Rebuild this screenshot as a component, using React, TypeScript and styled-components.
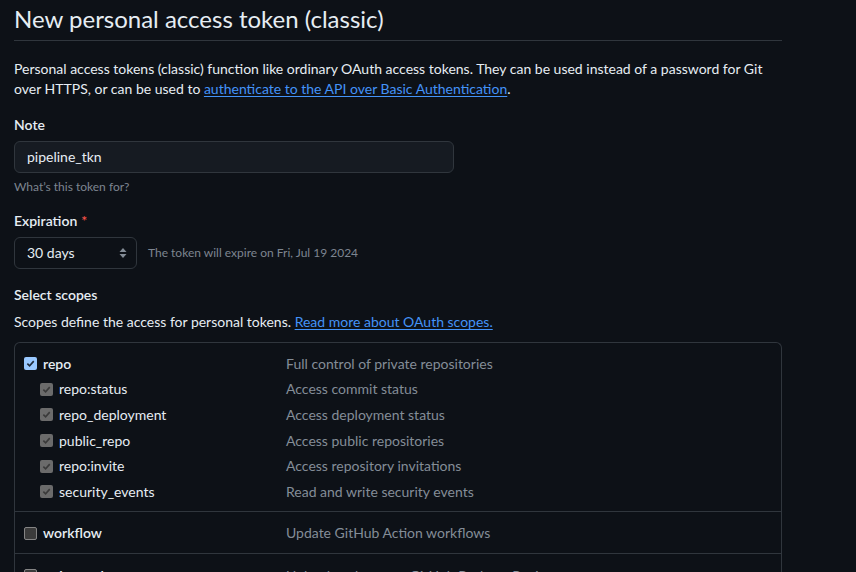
import React from 'react';
import styled, { createGlobalStyle } from 'styled-components';

const GlobalStyle = createGlobalStyle`
  html, body {
    margin: 0;
    padding: 0;
    background: #0d1117;
  }

  body {
    font-family: Lato, "Noto Sans", sans-serif;
    font-size: 14px;
    line-height: 20px;
    color: #e6edf3;
  }
`;

interface ScopeItem {
  name: string;
  description: string;
  checked?: boolean;
  children?: ScopeItem[];
}

const scopes: ScopeItem[] = [
  {
    name: 'repo',
    description: 'Full control of private repositories',
    checked: true,
    children: [
      { name: 'repo:status', description: 'Access commit status' },
      { name: 'repo_deployment', description: 'Access deployment status' },
      { name: 'public_repo', description: 'Access public repositories' },
      { name: 'repo:invite', description: 'Access repository invitations' },
      { name: 'security_events', description: 'Read and write security events' }
    ]
  },
  { name: 'workflow', description: 'Update GitHub Action workflows' },
  { name: 'write:packages', description: 'Upload packages to GitHub Package Registry' }
];

const Page = styled.div`
  width: 768px;
  padding: 0 14px;
`;

const Title = styled.h1`
  margin: 0;
  padding-top: 1px;
  padding-bottom: 3px;
  font-size: 24px;
  line-height: 36px;
  font-weight: 400;
  border-bottom: 1px solid #30363d;
`;

const Intro = styled.p`
  margin: 18px 0 0;
  line-height: 20px;
`;

const Link = styled.a`
  color: #4493f8;
  text-decoration: underline;
  text-underline-offset: 2px;
`;

const Field = styled.div<{ $top: number }>`
  margin-top: ${(p) => p.$top}px;
`;

const Label = styled.div`
  font-weight: 600;
  line-height: 20px;
`;

const Required = styled.span`
  color: #f85149;
  margin-left: 4px;
`;

const TextInput = styled.div`
  box-sizing: border-box;
  margin-top: 6px;
  width: 440px;
  height: 32px;
  padding: 0 12px;
  display: flex;
  align-items: center;
  background: #161b22;
  border: 1px solid #30363d;
  border-radius: 6px;
`;

const Hint = styled.div`
  margin-top: 5px;
  margin-bottom: -1px;
  font-size: 12px;
  line-height: 18px;
  color: #7d8590;
`;

const SelectRow = styled.div`
  margin-top: 6px;
  display: flex;
  align-items: center;
  gap: 11px;
`;

const Select = styled.div`
  box-sizing: border-box;
  width: 123px;
  height: 32px;
  padding: 0 8px 0 12px;
  display: flex;
  align-items: center;
  justify-content: space-between;
  background: #0d1117;
  border: 1px solid #30363d;
  border-radius: 6px;
`;

const Muted = styled.span`
  font-size: 12px;
  color: #7d8590;
`;

const Desc = styled.div`
  margin-top: 7px;
`;

const ScopeBox = styled.div`
  margin-top: 10px;
  border: 1px solid #30363d;
  border-bottom: none;
  border-radius: 6px 6px 0 0;
`;

const Group = styled.div`
  padding: 9px 0 7px;
  border-top: 1px solid #30363d;

  &:first-child {
    padding: 8px 0 6px;
    border-top: none;
  }
`;

const Row = styled.div<{ $nested?: boolean }>`
  display: flex;
  align-items: center;
  height: 25.6px;
  padding-left: ${(p) => (p.$nested ? 24 : 8)}px;
`;

const Name = styled.div<{ $nested?: boolean; $width: number }>`
  width: ${(p) => p.$width}px;
  display: flex;
  align-items: center;
  gap: 6px;
  font-weight: ${(p) => (p.$nested ? 400 : 600)};
`;

const ScopeDesc = styled.div`
  color: #848d97;
`;

const Box = styled.span<{ $state: 'on' | 'off' | 'locked' }>`
  box-sizing: border-box;
  width: 13px;
  height: 13px;
  margin-left: 1px;
  border-radius: 2px;
  display: inline-flex;
  align-items: center;
  justify-content: center;
  background: ${(p) => (p.$state === 'on' ? '#99c8ff' : p.$state === 'locked' ? '#6b6b6b' : '#3b3b3b')};
  border: 1px solid ${(p) => (p.$state === 'off' ? '#858585' : 'transparent')};
`;

const Checkbox: React.FC<{ state: 'on' | 'off' | 'locked' }> = ({ state }) => (
  <Box $state={state}>
    {state !== 'off' && (
      <svg width='9' height='9' viewBox='0 0 10 10'>
        <path
          d='M1.5 5.2 L4 7.6 L8.6 2.4'
          fill='none'
          stroke={state === 'on' ? '#1e2a3a' : '#3a3a3a'}
          strokeWidth='1.8'
        />
      </svg>
    )}
  </Box>
);

const SortArrows = () => (
  <svg width='10' height='14' viewBox='0 0 10 14'>
    <path d='M5 2 L8.5 6 L1.5 6 Z' fill='#848d97' />
    <path d='M5 12 L8.5 8 L1.5 8 Z' fill='#848d97' />
  </svg>
);

const App: React.FC = () => {
  return (
    <Page>
      <GlobalStyle />
      <Title>New personal access token (classic)</Title>
      <Intro>
        Personal access tokens (classic) function like ordinary OAuth access tokens. They can be used instead of a password for Git
        <br />
        over HTTPS, or can be used to <Link>authenticate to the API over Basic Authentication</Link>.
      </Intro>

      <Field $top={16}>
        <Label>Note</Label>
        <TextInput>pipeline_tkn</TextInput>
        <Hint>What’s this token for?</Hint>
      </Field>

      <Field $top={16}>
        <Label>
          Expiration<Required>*</Required>
        </Label>
        <SelectRow>
          <Select>
            30 days
            <SortArrows />
          </Select>
          <Muted>The token will expire on Fri, Jul 19 2024</Muted>
        </SelectRow>
      </Field>

      <Field $top={16}>
        <Label>Select scopes</Label>
        <Desc>
          Scopes define the access for personal tokens. <Link>Read more about OAuth scopes.</Link>
        </Desc>
        <ScopeBox>
          {scopes.map((scope) => (
            <Group key={scope.name}>
              <Row>
                <Name $width={263}>
                  <Checkbox state={scope.checked ? 'on' : 'off'} />
                  {scope.name}
                </Name>
                <ScopeDesc>{scope.description}</ScopeDesc>
              </Row>
              {scope.children?.map((child) => (
                <Row
                  $nested
                  key={child.name}
                >
                  <Name
                    $nested
                    $width={247}
                  >
                    <Checkbox state='locked' />
                    {child.name}
                  </Name>
                  <ScopeDesc>{child.description}</ScopeDesc>
                </Row>
              ))}
            </Group>
          ))}
        </ScopeBox>
      </Field>
    </Page>
  );
};

export default App;
